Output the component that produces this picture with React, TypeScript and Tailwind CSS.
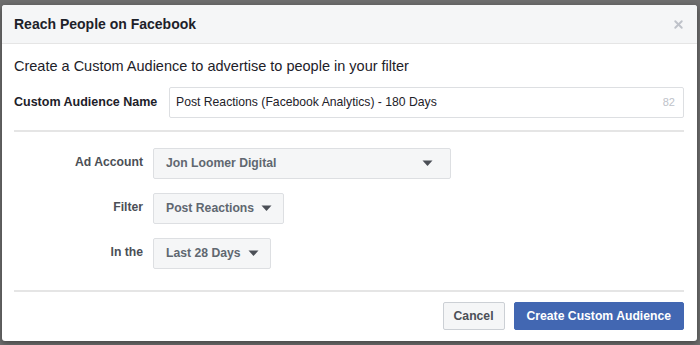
import { X } from "lucide-react";

function Caret() {
  return (
    <svg width="11" height="7" viewBox="0 0 11 7" className="shrink-0">
      <path d="M0.5 0.5h10L5.5 6z" fill="#4b4f56" />
    </svg>
  );
}

function Select({ label, value, wide }: { label: string; value: string; wide?: boolean }) {
  return (
    <div className="flex items-center">
      <span className="w-[129px] text-right font-bold text-[12.2px] text-[#4b4f56] -mt-[3px]">{label}</span>
      <div
        className={`ml-[10px] flex items-center h-[31px] border border-[#dddfe2] rounded-[2px] bg-[#f5f6f7] pl-[12px] pr-[11px] text-[12.2px] font-bold text-[#606770] ${
          wide ? "w-[298px] justify-between pr-[17px]" : "gap-[7px]"
        }`}
      >
        <span>{value}</span>
        <Caret />
      </div>
    </div>
  );
}

export default function App() {
  return (
    <div
      className="w-[700px] h-[345px] bg-[#6e6e6e] pt-[5px] pl-[2px] overflow-hidden"
      style={{ fontFamily: '"Liberation Sans", Arial, sans-serif' }}
    >
      <div className="w-[695px] h-[336px] bg-white rounded-[3px] overflow-hidden shadow-[0_2px_6px_rgba(0,0,0,0.4)] flex flex-col">
        <div className="h-[39px] bg-[#f5f6f7] border-b border-[#e5e5e5] flex items-center justify-between pl-[12px] pr-[12px]">
          <span className="text-[14px] font-bold text-[#1d2129]">Reach People on Facebook</span>
          <X size={13} strokeWidth={3.5} className="text-[#bec2c9]" />
        </div>
        <div className="px-[12px] flex flex-col">
          <p className="mt-[12px] text-[14.5px] text-[#1d2129] leading-[20px]">
            Create a Custom Audience to advertise to people in your filter
          </p>
          <div className="mt-[11px] flex items-center">
            <span className="w-[155px] font-bold text-[12.5px] text-[#1d2129]">Custom Audience Name</span>
            <div className="w-[515px] h-[31px] border border-[#dddfe2] rounded-[2px] flex items-center justify-between pl-[6px] pr-[8px]">
              <span className="text-[12.2px] text-[#1d2129]">Post Reactions (Facebook Analytics) - 180 Days</span>
              <span className="text-[11px] text-[#bec2c9]">82</span>
            </div>
          </div>
          <div className="mt-[12px] h-[2px] bg-[#e5e5e5] w-[670px]" />
          <div className="mt-[16px] flex flex-col gap-[14px]">
            <Select label="Ad Account" value="Jon Loomer Digital" wide />
            <Select label="Filter" value="Post Reactions" />
            <Select label="In the" value="Last 28 Days" />
          </div>
          <div className="mt-[21px] h-[2px] bg-[#e5e5e5] w-[670px]" />
          <div className="mt-[10px] flex justify-end gap-[9px] w-[670px]">
            <button className="h-[28px] px-[10px] border border-[#ccd0d5] rounded-[2px] bg-[#f5f6f7] text-[12.2px] font-bold text-[#4b4f56]">
              Cancel
            </button>
            <button className="h-[28px] px-[12px] border border-[#4267b2] rounded-[2px] bg-[#4267b2] text-[12.2px] font-bold text-white">
              Create Custom Audience
            </button>
          </div>
        </div>
      </div>
    </div>
  );
}
